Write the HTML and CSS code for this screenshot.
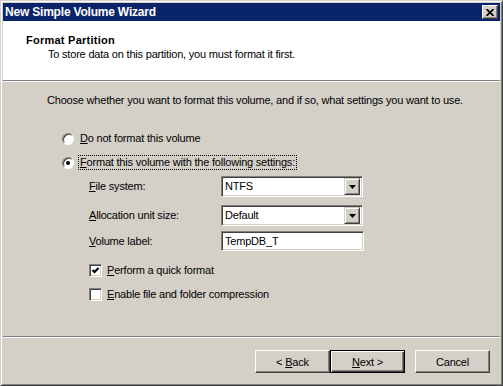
FILE: index.html
```html
<!DOCTYPE html>
<html lang="en">
<head>
  <meta charset="UTF-8" />
  <title>New Simple Volume Wizard</title>
  <link rel="stylesheet" href="styles.css">
</head>
<body>

  <div class="window">
    <div class="titlebar">
      <span class="title">New Simple Volume Wizard</span>
      <span class="close-btn">
        <svg width="8" height="7" viewBox="0 0 8 7"><path d="M0.5 0 L7.5 7 M7.5 0 L0.5 7" stroke="#000" stroke-width="1.7" fill="none"/></svg>
      </span>
    </div>

    <div class="header">
      <div class="header-title">Format Partition</div>
      <div class="header-sub">To store data on this partition, you must format it first.</div>
    </div>

    <div class="content">
      <p class="intro">Choose whether you want to format this volume, and if so, what settings you want to use.</p>

      <div class="option">
        <span class="radio"></span>
        <span class="option-label"><u>D</u>o not format this volume</span>
      </div>
      <div class="option">
        <span class="radio checked"></span>
        <span class="option-label focus"><u>F</u>ormat this volume with the following settings:</span>
      </div>

      <div class="settings">
        <div class="field first">
          <span class="field-label"><u>F</u>ile system:</span>
          <div class="combo">
            <span class="combo-value">NTFS</span>
            <span class="combo-btn"><svg width="7" height="4" viewBox="0 0 7 4"><path d="M0 0 H7 L3.5 4 Z" fill="#000"/></svg></span>
          </div>
        </div>
        <div class="field second">
          <span class="field-label"><u>A</u>llocation unit size:</span>
          <div class="combo">
            <span class="combo-value">Default</span>
            <span class="combo-btn"><svg width="7" height="4" viewBox="0 0 7 4"><path d="M0 0 H7 L3.5 4 Z" fill="#000"/></svg></span>
          </div>
        </div>
        <div class="field third">
          <span class="field-label"><u>V</u>olume label:</span>
          <div class="textbox">TempDB_T</div>
        </div>

        <div class="check-row first">
          <span class="checkbox">
            <svg width="7" height="7" viewBox="0 0 7 7"><polyline points="0.5,3 2.5,5 6.5,1" stroke="#000" stroke-width="2" fill="none"/></svg>
          </span>
          <span><u>P</u>erform a quick format</span>
        </div>
        <div class="check-row">
          <span class="checkbox"></span>
          <span><u>E</u>nable file and folder compression</span>
        </div>
      </div>
    </div>

    <div class="footer">
      <button class="btn">&lt; <u>B</u>ack</button>
      <button class="btn default"><u>N</u>ext &gt;</button>
      <button class="btn cancel">Cancel</button>
    </div>
  </div>

</body>
</html>
```

FILE: styles.css
```css
body {
  margin: 0;
  font-family: 'Liberation Sans', Arial, sans-serif;
  font-size: 11px;
  letter-spacing: -0.2px;
  color: #000;
  background-color: #d4d0c8;
}

.window {
  width: 503px;
  height: 386px;
  box-sizing: border-box;
  display: flex;
  flex-direction: column;
  padding: 2px;
  background-color: #d4d0c8;
  border: 1px solid;
  border-color: #d4d0c8 #404040 #404040 #d4d0c8;
  box-shadow: inset 1px 1px #fff, inset -1px -1px #808080;
}

.titlebar {
  height: 18px;
  display: flex;
  align-items: center;
  justify-content: space-between;
  padding: 0 2px 0 2px;
  background-color: #0a246a;
  color: white;
}

.title {
  font-weight: bold;
  font-size: 12px;
}

.close-btn {
  width: 16px;
  height: 14px;
  box-sizing: border-box;
  display: flex;
  align-items: center;
  justify-content: center;
  background-color: #d4d0c8;
  border: 1px solid;
  border-color: #fff #404040 #404040 #fff;
  box-shadow: inset -1px -1px #808080;
}

.header {
  height: 60px;
  box-sizing: border-box;
  padding: 12px 0 0 23px;
  background: white;
  border-bottom: 1px solid #808080;
  line-height: 14px;
}

.header-title {
  font-weight: bold;
  letter-spacing: 0.25px;
}

.header-sub {
  padding-left: 22px;
}

.content {
  flex: 1;
  border-top: 1px solid #fff;
  padding: 12px 0 0 44px;
  line-height: 13px;
}

.intro {
  margin: 0 0 24px 0;
}

.option {
  display: flex;
  align-items: center;
  margin-left: 15px;
  margin-bottom: 9px;
}

.radio {
  width: 12px;
  height: 12px;
  box-sizing: border-box;
  border-radius: 50%;
  background: white;
  border: 1px solid;
  border-color: #808080 #fff #fff #808080;
  box-shadow: inset 1px 1px #404040;
  position: relative;
}

.radio.checked::after {
  content: "";
  position: absolute;
  left: 3px;
  top: 3px;
  width: 4px;
  height: 4px;
  border-radius: 50%;
  background: #000;
}

.option-label {
  margin-left: 4px;
  padding: 0 1px;
  border: 1px dotted transparent;
}

.option-label.focus {
  border-color: #000;
}

.settings {
  margin-left: 42px;
  margin-top: -3px;
}

.field {
  display: flex;
  align-items: center;
}

.field.second {
  margin-top: 8px;
}

.field.third {
  margin-top: 5px;
}

.field-label {
  width: 132px;
}

.combo, .textbox {
  width: 142px;
  height: 21px;
  box-sizing: border-box;
  display: flex;
  align-items: center;
  background: white;
  border: 1px solid;
  border-color: #808080 #fff #fff #808080;
  box-shadow: inset 1px 1px #404040, inset -1px -1px #d4d0c8;
  padding: 0 2px 0 3px;
}

.textbox {
  width: 143px;
  height: 20px;
}

.combo-value {
  flex: 1;
}

.combo-btn {
  width: 16px;
  height: 17px;
  box-sizing: border-box;
  display: flex;
  align-items: center;
  justify-content: center;
  background-color: #d4d0c8;
  border: 1px solid;
  border-color: #d4d0c8 #404040 #404040 #d4d0c8;
  box-shadow: inset 1px 1px #fff, inset -1px -1px #808080;
}

.check-row {
  display: flex;
  align-items: center;
  gap: 5px;
  margin-top: 11px;
}

.check-row.first {
  margin-top: 13px;
}

.checkbox {
  width: 13px;
  height: 13px;
  box-sizing: border-box;
  display: flex;
  align-items: center;
  justify-content: center;
  background: white;
  border: 1px solid;
  border-color: #808080 #fff #fff #808080;
  box-shadow: inset 1px 1px #404040, inset -1px -1px #d4d0c8;
}

.footer {
  height: 47px;
  box-sizing: border-box;
  display: flex;
  justify-content: flex-end;
  align-items: flex-start;
  padding: 13px 10px 0 0;
  border-top: 1px solid #808080;
  box-shadow: inset 0 1px #fff;
}

.btn {
  width: 75px;
  height: 23px;
  box-sizing: border-box;
  font-family: inherit;
  font-size: 11px;
  letter-spacing: inherit;
  color: #000;
  background-color: #d4d0c8;
  border: 1px solid;
  border-color: #fff #404040 #404040 #fff;
  box-shadow: inset -1px -1px #808080;
  padding: 0;
  margin: 0;
}

.btn.default {
  border: 1px solid #000;
  box-shadow: inset 1px 1px #fff, inset -1px -1px #404040, inset -2px -2px #808080;
}

.btn.cancel {
  margin-left: 10px;
}
```
